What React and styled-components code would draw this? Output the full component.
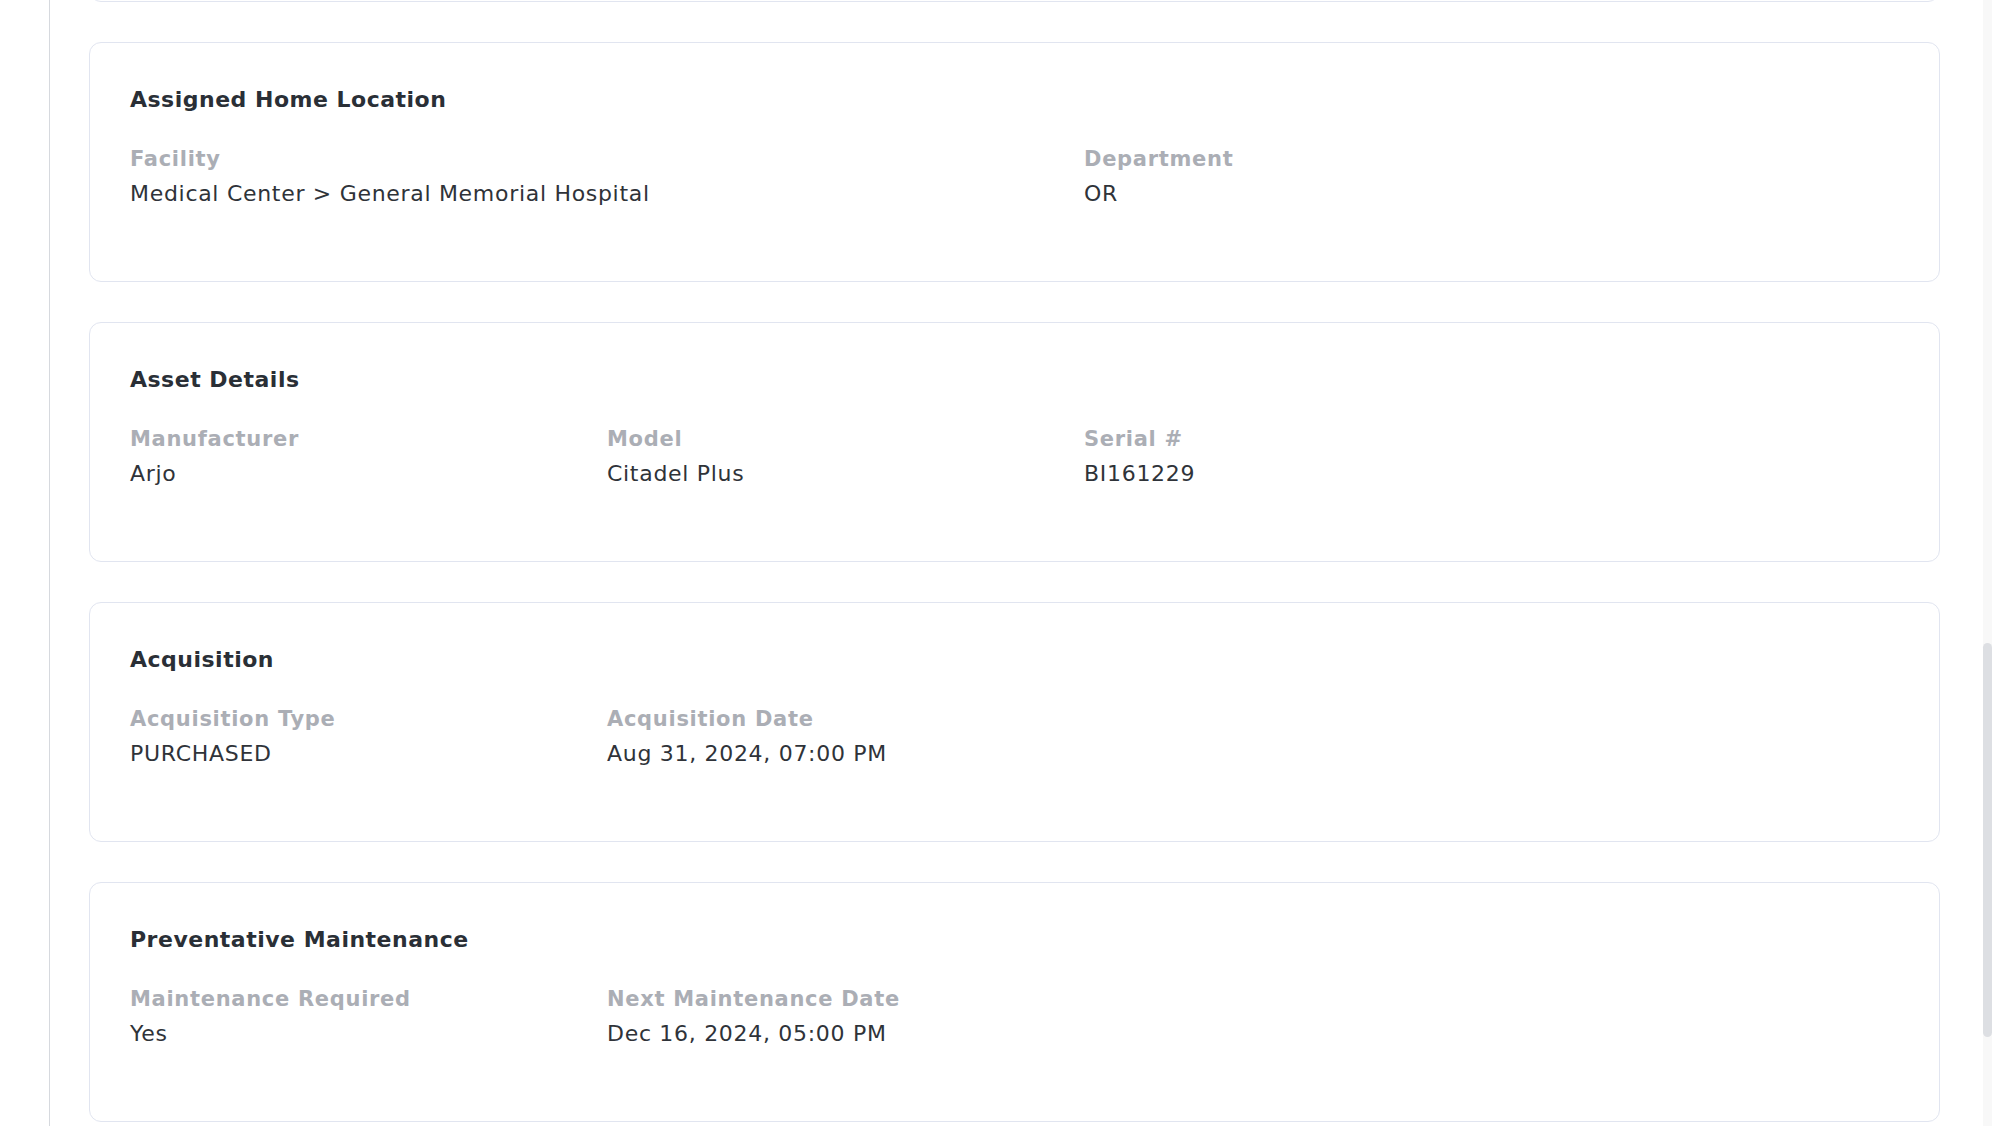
import React from 'react';
import styled, { createGlobalStyle } from 'styled-components';

const GlobalStyle = createGlobalStyle`
  html, body {
    margin: 0;
    padding: 0;
    height: 100%;
    overflow: hidden;
    background: #ffffff;
  }
  body {
    font-family: "DejaVu Sans", Inter, sans-serif;
    color: #2f3339;
  }
`

const Page = styled.div`
  display: flex;
  height: 100vh;
  overflow: hidden;
`

const Rail = styled.div`
  width: 49px;
  flex-shrink: 0;
  border-right: 1px solid #d6d9de;
`

const Content = styled.main`
  flex: 1;
  min-width: 0;
  display: flex;
  flex-direction: column;
  gap: 40px;
  padding: 0 43px 0 39px;
`

const Card = styled.section`
  border: 1px solid #e1e5f0;
  border-radius: 12px;
  padding: 41px 40px 0;
  height: 240px;
  box-sizing: border-box;
  background: #fff;
  flex-shrink: 0;
`

// the card above the fold: only its bottom edge is still on screen
const PrevCard = styled(Card)`
  margin-top: -238px;
`

const Title = styled.h2`
  margin: 0 0 29px;
  font-size: 22px;
  line-height: 32px;
  font-weight: 700;
  letter-spacing: 0.5px;
  color: #2a2f36;
`

const Fields = styled.div`
  display: grid;
  grid-template-columns: 477px 477px 477px minmax(0, 1fr);
`

const Field = styled.div`
  grid-column: span ${p => p.span || 1};
  display: flex;
  flex-direction: column;
  gap: 6px;
`

const Label = styled.div`
  font-size: 21px;
  line-height: 28px;
  font-weight: 700;
  letter-spacing: 0.7px;
  color: #abaeb5;
`

const Value = styled.div`
  font-size: 22px;
  line-height: 30px;
  font-weight: 400;
  letter-spacing: 0.7px;
  color: #2f3339;
`

const ScrollTrack = styled.div`
  width: 9px;
  flex-shrink: 0;
  background: #f8f8f8;
  display: flex;
  flex-direction: column;
`

const ScrollThumb = styled.div`
  margin-top: 643px;
  height: 394px;
  border-radius: 5px;
  background: #dddfe3;
`

const sections = [
  {
    title: 'Assigned Home Location',
    fields: [
      { label: 'Facility', value: 'Medical Center > General Memorial Hospital', span: 2 },
      { label: 'Department', value: 'OR' },
    ],
  },
  {
    title: 'Asset Details',
    fields: [
      { label: 'Manufacturer', value: 'Arjo' },
      { label: 'Model', value: 'Citadel Plus' },
      { label: 'Serial #', value: 'BI161229' },
    ],
  },
  {
    title: 'Acquisition',
    fields: [
      { label: 'Acquisition Type', value: 'PURCHASED' },
      { label: 'Acquisition Date', value: 'Aug 31, 2024, 07:00 PM' },
    ],
  },
  {
    title: 'Preventative Maintenance',
    fields: [
      { label: 'Maintenance Required', value: 'Yes' },
      { label: 'Next Maintenance Date', value: 'Dec 16, 2024, 05:00 PM' },
    ],
  },
]

export default function App() {
  return (
    <Page>
      <GlobalStyle />
      <Rail />
      <Content>
        <PrevCard />
        {sections.map(section => (
          <Card key={section.title}>
            <Title>{section.title}</Title>
            <Fields>
              {section.fields.map(field => (
                <Field key={field.label} span={field.span}>
                  <Label>{field.label}</Label>
                  <Value>{field.value}</Value>
                </Field>
              ))}
            </Fields>
          </Card>
        ))}
      </Content>
      <ScrollTrack>
        <ScrollThumb />
      </ScrollTrack>
    </Page>
  )
}
